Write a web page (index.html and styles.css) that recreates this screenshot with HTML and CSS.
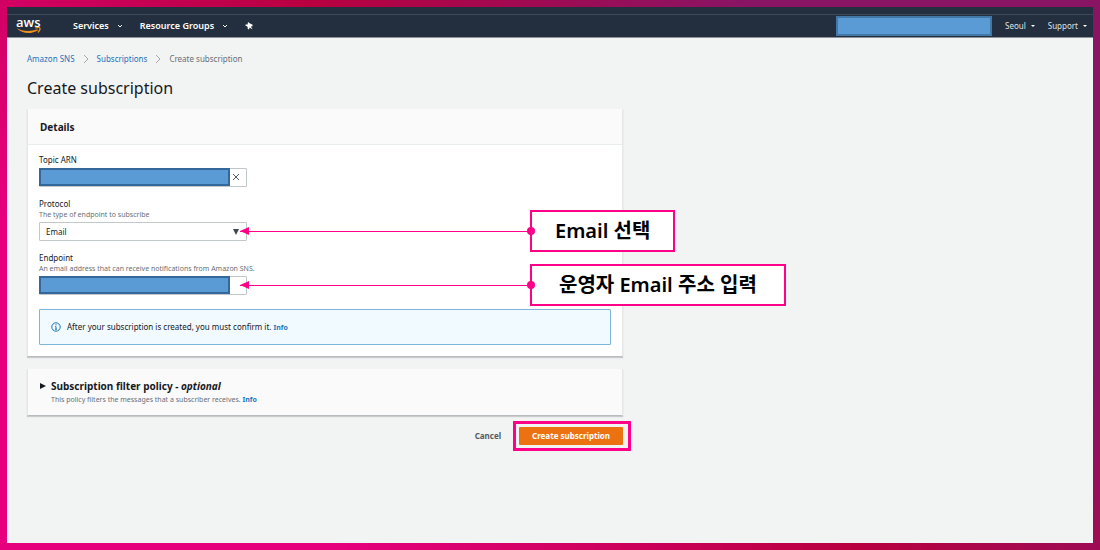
FILE: index.html
```
<!DOCTYPE html>
<html lang="ko">

<head>
    <meta charset="UTF-8">
    <title>Create subscription - Amazon SNS</title>
    <link rel="stylesheet" href="styles.css">
</head>

<body>
    <div class="console">
        <header class="topbar">
            <a class="logo" href="#" aria-label="AWS">
                <span class="logo-text">aws</span>
                <svg class="logo-smile" viewBox="0 0 25 8">
                    <path d="M.5 1C6 4.2 14 5 21.5 2.2L22 3.2C15 7.6 6 6.8 .5 1z" fill="#f0921e" />
                    <path d="M19.5 1C21.5 .4 23.4 .3 23.8 .9C24.2 1.7 23.5 3.8 22.3 5" fill="none" stroke="#f0921e" stroke-width="1.2" stroke-linecap="round" />
                </svg>
            </a>
            <nav class="menu">
                <button type="button">Services
                    <svg class="chevron" viewBox="0 0 6 4"><path d="M1 1l2 2 2-2" /></svg>
                </button>
                <button type="button">Resource Groups
                    <svg class="chevron" viewBox="0 0 6 4"><path d="M1 1l2 2 2-2" /></svg>
                </button>
                <button type="button" aria-label="Pin shortcuts">
                    <svg class="pin" viewBox="0 0 8 8"><path d="M3 0l2 1.6 2.6 1.2v1.4l-1.8.4L7.6 7.6 4.6 5.6 4 7.6 2.8 7 2.6 4.8.4 3.4l.2-.8 2-.2z" /></svg>
                </button>
            </nav>
            <div class="account">
                <div class="mask mask-account"></div>
                <button type="button">Seoul <span class="caret"></span></button>
                <button type="button">Support <span class="caret"></span></button>
            </div>
        </header>

        <main class="content">
            <nav class="breadcrumb" aria-label="Breadcrumb">
                <a href="#">Amazon SNS</a>
                <svg class="separator" viewBox="0 0 6 10"><path d="M1 1l4 4-4 4" /></svg>
                <a href="#">Subscriptions</a>
                <svg class="separator" viewBox="0 0 6 10"><path d="M1 1l4 4-4 4" /></svg>
                <span>Create subscription</span>
            </nav>
            <h1>Create subscription</h1>

            <form class="form">
                <section class="card">
                    <h2 class="card-header">Details</h2>
                    <div class="card-body">
                        <div class="field">
                            <label for="topic">Topic ARN</label>
                            <div class="control">
                                <input type="text" id="topic">
                                <div class="mask mask-input"></div>
                                <button type="button" class="clear" aria-label="Clear">
                                    <svg viewBox="0 0 8 8"><path d="M1 1l6 6M7 1l-6 6" /></svg>
                                </button>
                            </div>
                        </div>
                        <div class="field">
                            <label for="protocol">Protocol</label>
                            <p class="hint">The type of endpoint to subscribe</p>
                            <div class="control">
                                <select id="protocol">
                                    <option>Email</option>
                                </select>
                                <span class="select-arrow"></span>
                                <div class="callout">
                                    <span class="arrow"></span>
                                    <span class="note">Email 선택</span>
                                </div>
                            </div>
                        </div>
                        <div class="field">
                            <label for="endpoint">Endpoint</label>
                            <p class="hint">An email address that can receive notifications from Amazon SNS.</p>
                            <div class="control">
                                <input type="text" id="endpoint">
                                <div class="mask mask-input"></div>
                                <div class="callout">
                                    <span class="arrow"></span>
                                    <span class="note note-wide">운영자 Email 주소 입력</span>
                                </div>
                            </div>
                        </div>
                        <div class="alert">
                            <svg class="info-icon" viewBox="0 0 10 10">
                                <circle cx="5" cy="5" r="4.2" />
                                <path d="M5 2.2v1.2M4.2 4.6H5v2.6M4 7.2h2" />
                            </svg>
                            <p>After your subscription is created, you must confirm it. <a class="info" href="#">Info</a></p>
                        </div>
                    </div>
                </section>

                <section class="card policy">
                    <button type="button" class="expand" aria-label="Expand"></button>
                    <div>
                        <h2>Subscription filter policy - <em>optional</em></h2>
                        <p class="hint">This policy filters the messages that a subscriber receives. <a class="info" href="#">Info</a></p>
                    </div>
                </section>

                <div class="actions">
                    <button type="button" class="cancel">Cancel</button>
                    <div class="highlight">
                        <button type="submit" class="submit">Create subscription</button>
                    </div>
                </div>
            </form>
        </main>
    </div>
</body>

</html>
```
FILE: styles.css
```
* {
    box-sizing: border-box;
}

body {
    margin: 0;
    min-height: 100vh;
    padding: 7px;
    display: flex;
    background: linear-gradient(45deg, #e6007e 20%, #b80040 52%, #8a1464 78%);
    font-family: "Noto Sans", "Noto Sans CJK KR", sans-serif;
    font-size: 8px;
    line-height: 12px;
    color: #16191f;
}

h1, h2, p {
    margin: 0;
}

a {
    color: #1b75bb;
    text-decoration: none;
}

button, input, select {
    font: inherit;
    color: inherit;
    margin: 0;
}

button {
    padding: 0;
    border: 0;
    background: none;
}

svg {
    display: block;
    fill: none;
}

.console {
    flex: 1;
    background: #f2f3f3;
}

/* top bar */
.topbar {
    display: flex;
    align-items: center;
    height: 31px;
    padding: 8px 6px 0 9px;
    background: linear-gradient(#232f3e 7px, #3d4b58 7px, #3d4b58 8px, #232f3e 8px);
    border-bottom: 1px solid #8b9299;
    color: #fff;
}

.logo {
    width: 26px;
    color: #fff;
}

.logo-text {
    display: block;
    font: 600 13px/10px "Open Sans", sans-serif;
}

.logo-smile {
    width: 25px;
    height: 8px;
}

.menu {
    display: flex;
    gap: 17px;
    margin-left: 31px;
    font-size: 9px;
    font-weight: 600;
}

.menu button, .account button {
    display: flex;
    align-items: center;
}

.menu button {
    gap: 8px;
}

.chevron {
    width: 6px;
    height: 4px;
    stroke: #fff;
}

.pin {
    width: 8px;
    height: 8px;
    fill: #fff;
}

.account {
    display: flex;
    align-items: center;
    gap: 13px;
    margin-left: auto;
    color: #dfe2e5;
}

.account button {
    gap: 5px;
}

.caret {
    border: 2px solid transparent;
    border-top-color: #fff;
    border-bottom: 0;
}

.mask {
    background: #5b9bd5;
    border: 2px solid #35689a;
}

.mask-account {
    width: 156px;
    height: 20px;
    border-color: #4278a8;
}

/* page */
.content {
    padding: 15px 20px;
}

.breadcrumb {
    display: flex;
    align-items: center;
    gap: 8px;
    color: #687078;
}

.separator {
    width: 6px;
    height: 10px;
    stroke: #a0a8ac;
}

h1 {
    margin: 11px 0 9px;
    font-size: 16px;
    font-weight: 400;
    line-height: 24px;
}

.form {
    max-width: 596px;
}

.card {
    background: #fff;
    border: 1px solid #e6e8e8;
    border-top: 0;
    border-bottom-color: #b8bcbf;
    box-shadow: 0 1px 1px #c8cccc;
}

h2 {
    font-size: 10px;
    font-weight: 700;
    line-height: 14px;
}

.card-header {
    padding: 11px 12px 10px;
    background: #fafafa;
    border-bottom: 1px solid #eaeded;
}

.card-body {
    padding: 9px 11px 11px;
}

.field {
    margin-bottom: 10px;
}

.field label {
    display: block;
}

.hint {
    font-size: 7px;
    line-height: 10px;
    color: #687078;
}

.control {
    position: relative;
    width: 208px;
    height: 20px;
    margin-top: 2px;
}

.control input, .control select {
    display: block;
    width: 100%;
    height: 19px;
    padding: 0 6px;
    background: #fff;
    border: 1px solid #c2c8ca;
    border-radius: 1px;
    appearance: none;
}

.mask-input {
    position: absolute;
    top: 0;
    left: 0;
    width: 191px;
    height: 18px;
}

.clear {
    position: absolute;
    top: 5px;
    right: 7px;
}

.clear svg {
    width: 8px;
    height: 8px;
    stroke: #545b64;
}

.select-arrow {
    position: absolute;
    top: 7px;
    right: 8px;
    border: 3px solid transparent;
    border-top: 6px solid #414750;
    border-bottom: 0;
}

/* callouts over the form */
.callout {
    position: absolute;
    top: -12px;
    left: 201px;
    display: flex;
    align-items: center;
}

.arrow {
    position: relative;
    width: 290px;
    height: 1px;
    background: #ff0088;
}

.arrow::before {
    content: "";
    position: absolute;
    top: -4px;
    left: 0;
    border: 4px solid transparent;
    border-right: 9px solid #ff0088;
    border-left: 0;
}

.arrow::after {
    content: "";
    position: absolute;
    top: -4px;
    right: -5px;
    width: 8px;
    height: 8px;
    border-radius: 50%;
    background: #ff0088;
}

.note {
    padding: 6px 23px;
    background: #fff;
    border: 2px solid #ff0088;
    font-size: 20px;
    font-weight: 600;
    line-height: 26px;
    white-space: nowrap;
    color: #000;
}

.note-wide {
    padding: 6px 27px;
}

.alert {
    display: flex;
    align-items: center;
    gap: 6px;
    margin-top: 13px;
    padding: 11px;
    background: #f1faff;
    border: 1px solid #7db4dc;
    border-radius: 1px;
}

.info-icon {
    width: 10px;
    height: 10px;
    stroke: #1b75bb;
}

.info {
    font-size: 7px;
    font-weight: 700;
    line-height: 10px;
}

.policy {
    display: flex;
    gap: 5px;
    margin-top: 12px;
    padding: 10px 12px;
    background: #fafafa;
}

.policy h2 {
    margin-bottom: 2px;
}

.expand {
    height: 6px;
    margin-top: 4px;
    border: 3px solid transparent;
    border-left: 6px solid #16191f;
    border-right: 0;
}

.actions {
    display: flex;
    justify-content: flex-end;
    align-items: center;
    gap: 12px;
    margin: 5px -8px 0 0;
    font-weight: 700;
}

.cancel {
    color: #545b64;
}

.highlight {
    padding: 3px 5px 3px 3px;
    border: 3px solid #ff0088;
}

.submit {
    display: block;
    padding: 3px 13px;
    background: #ec7211;
    border-radius: 1px;
    color: #fff;
}
```
